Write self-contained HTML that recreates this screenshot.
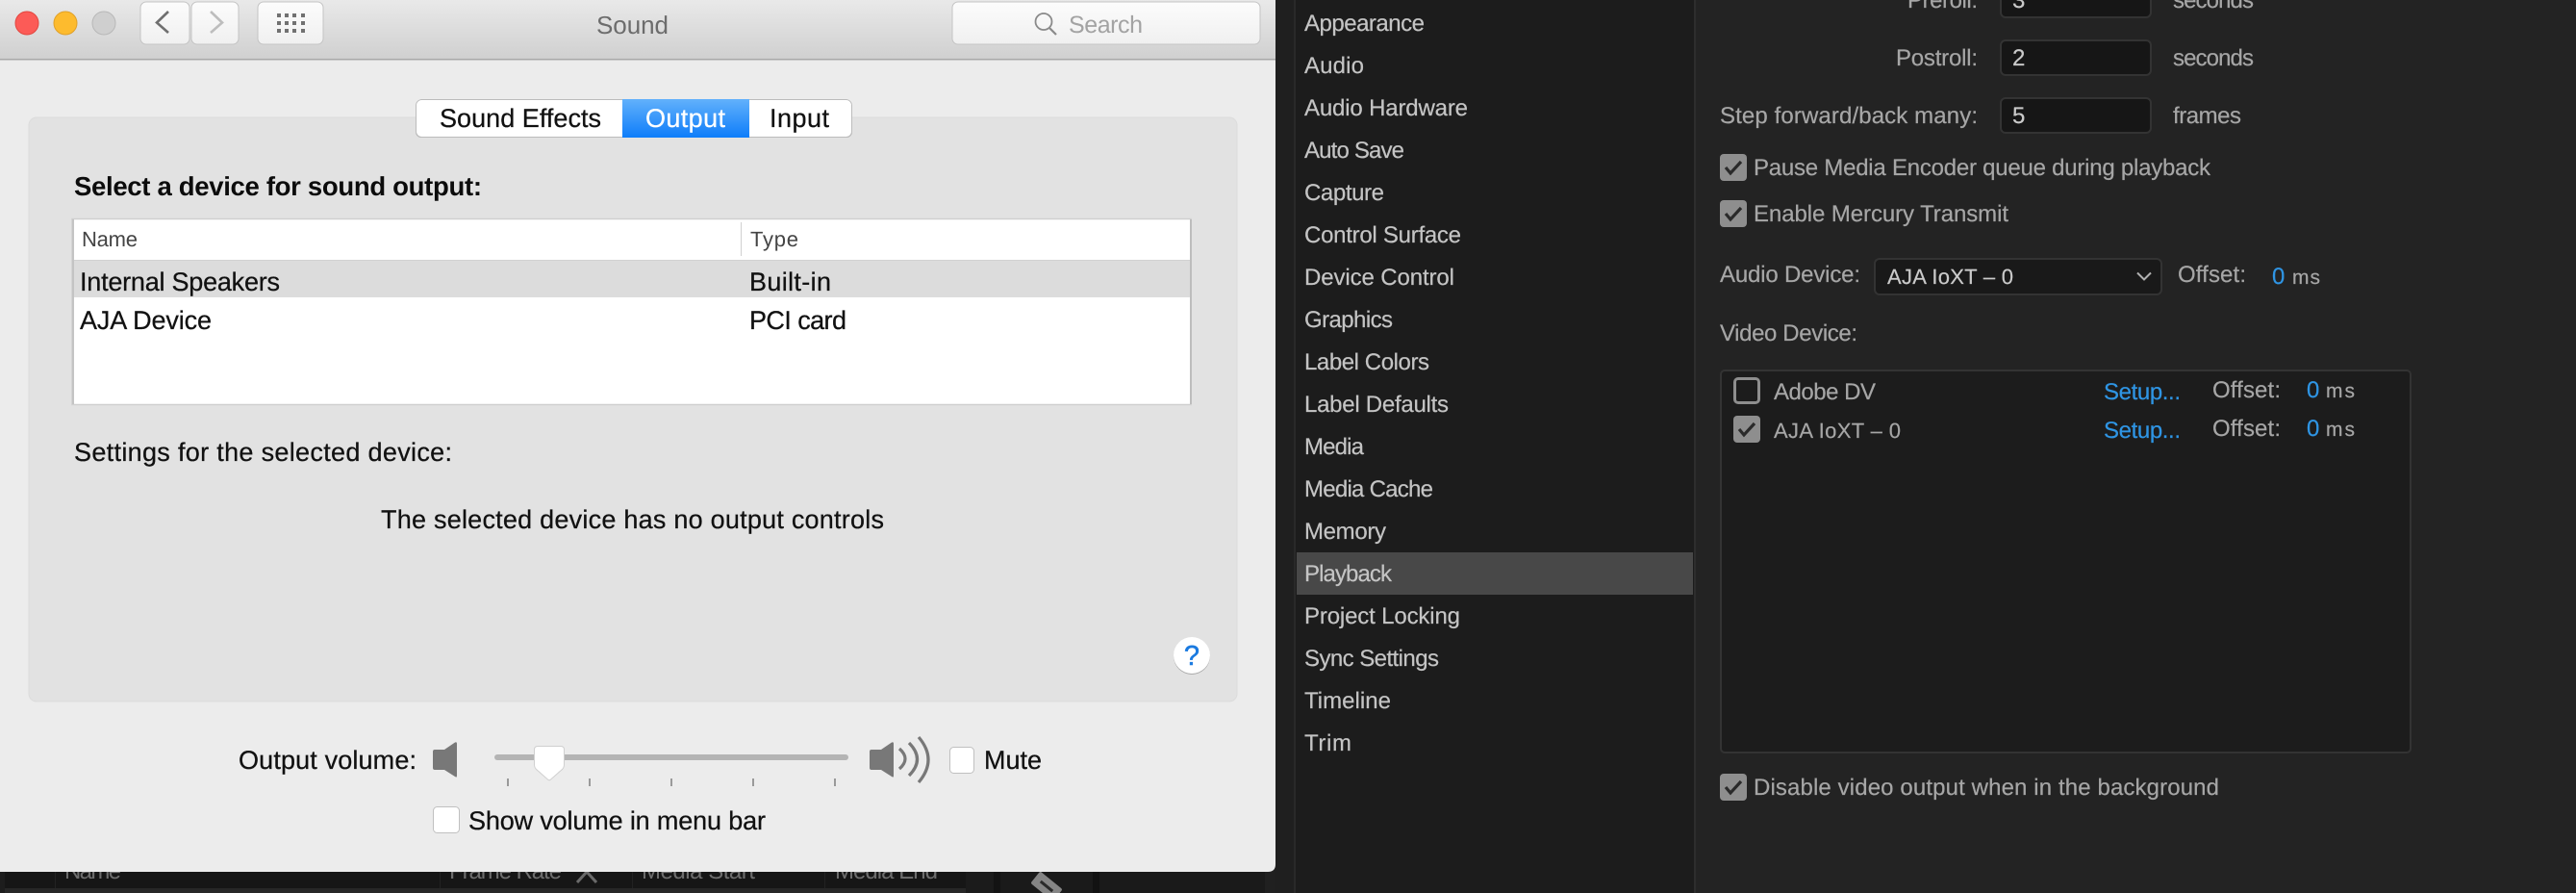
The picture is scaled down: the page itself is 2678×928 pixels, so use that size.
<!DOCTYPE html>
<html>
<head>
<meta charset="utf-8">
<title>Sound</title>
<style>
html,body{margin:0;padding:0;background:#1c1c1c;width:2678px;height:928px;overflow:hidden}
svg{display:block;position:absolute;left:0;top:0}
text{font-family:"Liberation Sans",sans-serif;text-rendering:geometricPrecision}
.k{font-size:27px;fill:#111;stroke:#111;stroke-width:.25px}
.s{font-size:24px;fill:#c4c4c4;stroke:#c4c4c4;stroke-width:.2px}
.l{font-size:24px;fill:#a6a6a6;stroke:#a6a6a6;stroke-width:.2px}
.v{font-size:24px;fill:#cacaca;stroke:#cacaca;stroke-width:.2px}
.b{font-size:24px;fill:#2f95e4;stroke:#2f95e4;stroke-width:.2px}
.d{font-size:24px;fill:#6e6e6e}
</style>
</head>
<body>
<svg width="2678" height="928" viewBox="0 0 2678 928" xmlns="http://www.w3.org/2000/svg">
<defs>
<linearGradient id="tb" x1="0" y1="0" x2="0" y2="1"><stop offset="0" stop-color="#e9e9e9"/><stop offset="1" stop-color="#d0d0d0"/></linearGradient>
<linearGradient id="bt" x1="0" y1="0" x2="0" y2="1"><stop offset="0" stop-color="#fcfcfc"/><stop offset="1" stop-color="#f0f0f0"/></linearGradient>
<linearGradient id="bl" x1="0" y1="0" x2="0" y2="1"><stop offset="0" stop-color="#62b1fb"/><stop offset="1" stop-color="#0e7dfa"/></linearGradient>
<clipPath id="below"><rect x="0" y="906" width="1330" height="22"/></clipPath>
<clipPath id="tabs"><rect x="432" y="103" width="454" height="39" rx="6"/></clipPath>
</defs>

<!-- background under window -->
<rect width="2678" height="928" fill="#1c1c1c"/>
<rect x="0" y="890" width="1004" height="38" fill="#161616"/>
<rect x="0" y="890" width="5" height="38" fill="#1d1d1d"/>
<rect x="5" y="923" width="999" height="5" fill="#272727"/>
<rect x="57" y="900" width="1" height="23" fill="#222"/>
<rect x="457" y="900" width="1" height="23" fill="#222"/>
<rect x="657" y="900" width="1" height="23" fill="#222"/>
<rect x="857" y="900" width="1" height="23" fill="#222"/>
<rect x="1004" y="890" width="29" height="38" fill="#1b1b1b"/>
<rect x="1033" y="890" width="7" height="38" fill="#131313"/>
<rect x="1040" y="890" width="96" height="38" fill="#1a1a1a"/>
<rect x="1136" y="890" width="7" height="38" fill="#121212"/>
<rect x="1143" y="890" width="172" height="38" fill="#1a1a1a"/>
<rect x="1315" y="0" width="30" height="928" fill="#202020"/>
<rect x="1326" y="0" width="19" height="928" fill="#1f1f1f"/>
<g clip-path="url(#below)">
<text class="d" x="67" y="913" textLength="59">Name</text>
<text class="d" x="467" y="913" textLength="117">Frame Rate</text>
<text class="d" x="667" y="913" textLength="118">Media Start</text>
<text class="d" x="868" y="913" textLength="107">Media End</text>
<path d="M600 917 L610 906 L620 917" fill="none" stroke="#6a6a6a" stroke-width="3"/>
<g transform="translate(1088 921) rotate(-51)"><rect x="-8" y="-15" width="16" height="30" rx="2" fill="#858585"/><rect x="-1.500" y="-8" width="3" height="16" fill="#2a2a2a"/></g>
</g>

<!-- right panels -->
<rect x="1345" y="0" width="2" height="928" fill="#292929"/>
<rect x="1347" y="0" width="415" height="928" fill="#1c1c1c"/>
<rect x="1348" y="574" width="412" height="44" fill="#484848"/>
<rect x="1762" y="0" width="916" height="928" fill="#232323"/>
<rect x="1761" y="0" width="2" height="928" fill="#2d2d2d"/>

<!-- sidebar -->
<g class="s">
<text class="s" x="1356" y="32" textLength="125">Appearance</text>
<text class="s" x="1356" y="76" textLength="62">Audio</text>
<text class="s" x="1356" y="120" textLength="170">Audio Hardware</text>
<text class="s" x="1356" y="164" textLength="104">Auto Save</text>
<text class="s" x="1356" y="208" textLength="83">Capture</text>
<text class="s" x="1356" y="252" textLength="163">Control Surface</text>
<text class="s" x="1356" y="296" textLength="156">Device Control</text>
<text class="s" x="1356" y="340" textLength="92">Graphics</text>
<text class="s" x="1356" y="384" textLength="130">Label Colors</text>
<text class="s" x="1356" y="428" textLength="150">Label Defaults</text>
<text class="s" x="1356" y="472" textLength="62">Media</text>
<text class="s" x="1356" y="516" textLength="134">Media Cache</text>
<text class="s" x="1356" y="560" textLength="85">Memory</text>
<text class="s" x="1356" y="604" textLength="91">Playback</text>
<text class="s" x="1356" y="648" textLength="162">Project Locking</text>
<text class="s" x="1356" y="692" textLength="140">Sync Settings</text>
<text class="s" x="1356" y="736" textLength="90">Timeline</text>
<text class="s" x="1356" y="780" textLength="49">Trim</text>
</g>

<!-- playback prefs -->
<rect x="2080" y="-20" width="156" height="38" rx="5" fill="#161616" stroke="#333" stroke-width="2"/>
<rect x="2080" y="42" width="156" height="36" rx="5" fill="#161616" stroke="#333" stroke-width="2"/>
<rect x="2080" y="102" width="156" height="36" rx="5" fill="#161616" stroke="#333" stroke-width="2"/>
<text class="l" x="1983" y="8" textLength="73">Preroll:</text>
<text class="v" x="2092" y="8">3</text>
<text class="l" x="2259" y="8" textLength="84">seconds</text>
<text class="l" x="1971" y="68" textLength="85">Postroll:</text>
<text class="v" x="2092" y="68">2</text>
<text class="l" x="2259" y="68" textLength="84">seconds</text>
<text class="l" x="1788" y="128" textLength="268">Step forward/back many:</text>
<text class="v" x="2092" y="128">5</text>
<text class="l" x="2259" y="128" textLength="71">frames</text>

<rect x="1788" y="160" width="28" height="28" rx="4" fill="#8e8e8e"/>
<path d="M1794 174 L1799 180 L1810 168" fill="none" stroke="#2a2a2a" stroke-width="3.2"/>
<text class="l" x="1823" y="182" textLength="475">Pause Media Encoder queue during playback</text>
<rect x="1788" y="208" width="28" height="28" rx="4" fill="#8e8e8e"/>
<path d="M1794 222 L1799 228 L1810 216" fill="none" stroke="#2a2a2a" stroke-width="3.2"/>
<text class="l" x="1823" y="230" textLength="265">Enable Mercury Transmit</text>

<text class="l" x="1788" y="293" textLength="146">Audio Device:</text>
<rect x="1949" y="269" width="298" height="37" rx="5" fill="#191919" stroke="#333" stroke-width="2"/>
<text class="v" x="1962" y="295" textLength="131" style="font-size:22px">AJA IoXT – 0</text>
<path d="M2222 283.500 L2229 290.500 L2236 283.500" fill="none" stroke="#b0b0b0" stroke-width="2"/>
<text class="l" x="2264" y="293" textLength="71">Offset:</text>
<text class="b" x="2362" y="295" textLength="13">0</text>
<text class="l" x="2383" y="295" textLength="29" style="font-size:21px">ms</text>

<text class="l" x="1788" y="354" textLength="143">Video Device:</text>
<rect x="1789" y="385" width="717" height="397" rx="4" fill="#1c1c1c" stroke="#333" stroke-width="2"/>
<rect x="1803.500" y="393.500" width="25" height="25" rx="3.500" fill="#1c1c1c" stroke="#8e8e8e" stroke-width="3"/>
<text class="l" x="1844" y="415" textLength="106">Adobe DV</text>
<text class="b" x="2187" y="415" textLength="80">Setup...</text>
<text class="l" x="2300" y="413" textLength="71">Offset:</text>
<text class="b" x="2398" y="413" textLength="13">0</text>
<text class="l" x="2418" y="413" textLength="30" style="font-size:21px">ms</text>
<rect x="1802" y="432" width="28" height="28" rx="4" fill="#8e8e8e"/>
<path d="M1808 446 L1813 452 L1824 440" fill="none" stroke="#2a2a2a" stroke-width="3.2"/>
<text class="l" x="1844" y="455" textLength="132" style="font-size:22px">AJA IoXT – 0</text>
<text class="b" x="2187" y="455" textLength="80">Setup...</text>
<text class="l" x="2300" y="453" textLength="71">Offset:</text>
<text class="b" x="2398" y="453" textLength="13">0</text>
<text class="l" x="2418" y="453" textLength="30" style="font-size:21px">ms</text>

<rect x="1788" y="804" width="28" height="28" rx="4" fill="#8e8e8e"/>
<path d="M1794 818 L1799 824 L1810 812" fill="none" stroke="#2a2a2a" stroke-width="3.2"/>
<text class="l" x="1823" y="826" textLength="484">Disable video output when in the background</text>

<!-- sound window -->
<path d="M0 0 H1326 V898 Q1326 906 1318 906 H0 Z" fill="#ececec"/>
<rect x="0" y="0" width="1326" height="61" fill="url(#tb)"/>
<rect x="0" y="61" width="1326" height="1.500" fill="#a8a8a8"/>

<ellipse cx="28" cy="24" rx="12" ry="12" fill="#fc5b57" stroke="#e2463f" stroke-width="1"/>
<ellipse cx="68" cy="24" rx="12" ry="12" fill="#fdbb2e" stroke="#e0a028" stroke-width="1"/>
<ellipse cx="108" cy="24" rx="12" ry="12" fill="#cfcfcf" stroke="#b8b8b8" stroke-width="1"/>

<rect x="146" y="2" width="51" height="44" rx="6" fill="url(#bt)" stroke="#c4c4c4" stroke-width="1"/>
<path d="M175 12 L163 23.500 L175 34" fill="none" stroke="#6f6f6f" stroke-width="2.600"/>
<rect x="199" y="2" width="49" height="44" rx="6" fill="url(#bt)" stroke="#c4c4c4" stroke-width="1"/>
<path d="M219 12 L231 23.500 L219 34" fill="none" stroke="#bdbdbd" stroke-width="2.600"/>
<rect x="268" y="2" width="68" height="44" rx="6" fill="url(#bt)" stroke="#c4c4c4" stroke-width="1"/>
<g fill="#717171">
<rect x="288" y="14" width="4" height="4"/><rect x="296" y="14" width="4" height="4"/><rect x="304" y="14" width="4" height="4"/><rect x="313" y="14" width="4" height="4"/>
<rect x="288" y="22" width="4" height="4"/><rect x="296" y="22" width="4" height="4"/><rect x="304" y="22" width="4" height="4"/><rect x="313" y="22" width="4" height="4"/>
<rect x="288" y="30" width="4" height="4"/><rect x="296" y="30" width="4" height="4"/><rect x="304" y="30" width="4" height="4"/><rect x="313" y="30" width="4" height="4"/>
</g>
<text x="620" y="35" font-size="26" fill="#6c6c6c" textLength="75">Sound</text>
<rect x="990" y="2" width="320" height="44" rx="6" fill="url(#bt)" stroke="#c4c4c4" stroke-width="1"/>
<circle cx="1085" cy="22.500" r="8.500" fill="none" stroke="#8a8a8a" stroke-width="1.800"/>
<path d="M1091 29 L1098 36" stroke="#8a8a8a" stroke-width="2.200"/>
<text x="1111" y="34" font-size="25" fill="#a3a3a3" textLength="77">Search</text>

<!-- panel -->
<rect x="30" y="122" width="1256" height="607" rx="8" fill="#e2e2e2" stroke="#dcdcdc" stroke-width="1"/>

<!-- tabs -->
<rect x="432" y="104" width="454" height="39" rx="6" fill="#a9a9a9"/>
<g clip-path="url(#tabs)">
<rect x="432" y="103" width="215" height="39" fill="#fff"/>
<rect x="647" y="103" width="132" height="39" fill="url(#bl)"/>
<rect x="779" y="103" width="107" height="39" fill="#fff"/>
</g>
<rect x="432.500" y="103.500" width="453" height="39" rx="6" fill="none" stroke="#bcbcbc" stroke-width="1"/>
<rect x="647" y="103" width="132" height="40" fill="url(#bl)"/>
<text class="k" x="457" y="132" textLength="168">Sound Effects</text>
<text class="k" x="671" y="132" textLength="83" style="fill:#fff;stroke:#fff">Output</text>
<text class="k" x="800" y="132" textLength="62">Input</text>

<text x="77" y="203" font-size="27.500" font-weight="700" fill="#0c0c0c" textLength="424">Select a device for sound output:</text>

<!-- table -->
<rect x="75" y="227.500" width="1163" height="193" fill="#fff" stroke="#cfcfcf" stroke-width="1.500"/>
<rect x="75" y="228" width="2" height="192" fill="#c4c4c4"/>
<rect x="1237" y="228" width="2" height="192" fill="#bdbdbd"/>
<rect x="77" y="271" width="1160" height="38" fill="#dcdcdc"/>
<rect x="77" y="270" width="1160" height="1" fill="#d2d2d2"/>
<rect x="770" y="231" width="1" height="35" fill="#d0d0d0"/>
<text x="85" y="256" font-size="22" fill="#444" textLength="58">Name</text>
<text x="780" y="256" font-size="22" fill="#444" textLength="50">Type</text>
<text class="k" x="83" y="302" textLength="208">Internal Speakers</text>
<text class="k" x="779" y="302" textLength="85">Built-in</text>
<text class="k" x="83" y="342" textLength="137">AJA Device</text>
<text class="k" x="779" y="342" textLength="101">PCI card</text>

<text class="k" x="77" y="479" textLength="393">Settings for the selected device:</text>
<text class="k" x="396" y="549" textLength="523">The selected device has no output controls</text>

<!-- help -->
<circle cx="1239" cy="682" r="19" fill="#aaa"/>
<circle cx="1239" cy="681" r="19" fill="#fff"/>
<text x="1239" y="691" font-size="29" fill="#1a7ae0" stroke="#1a7ae0" stroke-width=".5" text-anchor="middle">?</text>

<!-- volume -->
<text class="k" x="248" y="799" textLength="185">Output volume:</text>
<path d="M452 779 H462 L473 771.500 Q475 770.500 475 773 V806 Q475 808.500 473 807 L462 800 H452 Q450 800 450 798 V781 Q450 779 452 779Z" fill="#787878"/>
<rect x="514" y="784" width="368" height="6" rx="3" fill="#b4b4b4"/>
<g fill="#9a9a9a">
<rect x="527" y="809" width="2" height="8"/><rect x="612" y="809" width="2" height="8"/><rect x="697" y="809" width="2" height="8"/><rect x="782" y="809" width="2" height="8"/><rect x="867" y="809" width="2" height="8"/>
</g>
<path d="M559 775.500 H583 Q586.500 775.500 586.500 779 V795 Q586.500 797 585 799 L572 810.500 Q571 811 570 810.500 L557 799 Q555.500 797 555.500 795 V779 Q555.500 775.500 559 775.500Z" fill="#fff" stroke="#d0d0d0" stroke-width="1"/>
<path d="M906 779 H916 L927 771.500 Q929 770.500 929 773 V806 Q929 808.500 927 807 L916 800 H906 Q904 800 904 798 V781 Q904 779 906 779Z" fill="#787878"/>
<path d="M935 778 Q947 788.500 935 799" fill="none" stroke="#787878" stroke-width="3.200"/>
<path d="M945 772 Q962 789 945 806" fill="none" stroke="#787878" stroke-width="3.200"/>
<path d="M955 766 Q975 789.500 955 813" fill="none" stroke="#787878" stroke-width="3.200"/>
<rect x="987.500" y="776.500" width="25" height="27" rx="4" fill="#fff" stroke="#c0c0c0" stroke-width="1"/>
<text class="k" x="1023" y="799" textLength="60">Mute</text>
<rect x="450.500" y="838.500" width="27" height="27" rx="4" fill="#fff" stroke="#c0c0c0" stroke-width="1"/>
<text class="k" x="487" y="862" textLength="309">Show volume in menu bar</text>
</svg>
</body>
</html>
